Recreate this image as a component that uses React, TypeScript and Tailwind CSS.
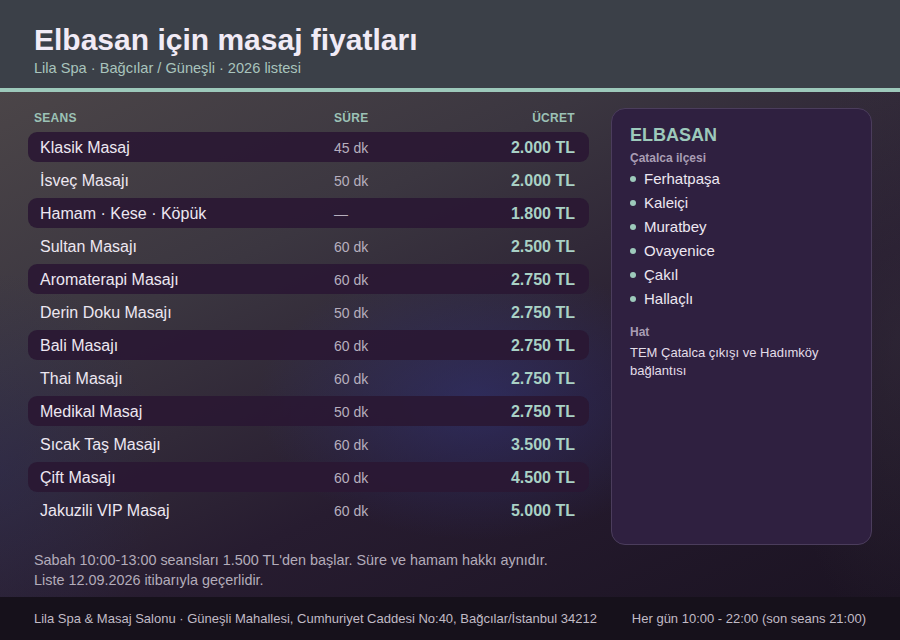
import React from "react";

const seanslar = [
  { ad: "Klasik Masaj", sure: "45 dk", ucret: "2.000 TL" },
  { ad: "İsveç Masajı", sure: "50 dk", ucret: "2.000 TL" },
  { ad: "Hamam · Kese · Köpük", sure: "—", ucret: "1.800 TL" },
  { ad: "Sultan Masajı", sure: "60 dk", ucret: "2.500 TL" },
  { ad: "Aromaterapi Masajı", sure: "60 dk", ucret: "2.750 TL" },
  { ad: "Derin Doku Masajı", sure: "50 dk", ucret: "2.750 TL" },
  { ad: "Bali Masajı", sure: "60 dk", ucret: "2.750 TL" },
  { ad: "Thai Masajı", sure: "60 dk", ucret: "2.750 TL" },
  { ad: "Medikal Masaj", sure: "50 dk", ucret: "2.750 TL" },
  { ad: "Sıcak Taş Masajı", sure: "60 dk", ucret: "3.500 TL" },
  { ad: "Çift Masajı", sure: "60 dk", ucret: "4.500 TL" },
  { ad: "Jakuzili VIP Masaj", sure: "60 dk", ucret: "5.000 TL" },
];

const mahalleler = ["Ferhatpaşa", "Kaleiçi", "Muratbey", "Ovayenice", "Çakıl", "Hallaçlı"];

const App: React.FC = () => {
  return (
    <div className="w-[900px] h-[640px] flex flex-col overflow-hidden font-['Liberation_Sans',Arial,sans-serif] bg-[#1a1320]">
      {/* Header */}
      <header className="h-[88px] bg-[#3b4048] px-[34px] pt-[22px]">
        <h1 className="text-[30px] leading-[36px] font-bold text-[#f1ebf6]">Elbasan için masaj fiyatları</h1>
        <p className="text-[14.6px] leading-[20px] text-[#a9c4bd]">Lila Spa · Bağcılar / Güneşli · 2026 listesi</p>
      </header>
      <div className="h-[4px] bg-[#9dc9bb]" />

      {/* Body */}
      <main className="flex-1 flex flex-col px-[28px] pt-4 bg-[radial-gradient(ellipse_220px_140px_at_53%_61%,rgba(50,52,118,0.6),transparent),radial-gradient(ellipse_160px_200px_at_0%_75%,rgba(40,40,90,0.35),transparent),radial-gradient(ellipse_120px_300px_at_100%_50%,rgba(60,55,65,0.35),transparent),linear-gradient(155deg,#4b4548_0%,#3b3640_30%,#271c30_62%,#1b1322_100%)]">
        <div className="flex items-start gap-[22px]">
          {/* Price table */}
          <section className="flex-1">
            <div className="grid grid-cols-[300px_1fr_auto] items-center h-[20px] pl-[6px] pr-[14px] text-[12px] font-bold tracking-wide text-[#9cc2b6]">
              <span>SEANS</span>
              <span>SÜRE</span>
              <span>ÜCRET</span>
            </div>
            <div className="mt-1 flex flex-col gap-[3px]">
              {seanslar.map((s, i) => (
                <div
                  key={s.ad}
                  className={`grid grid-cols-[294px_1fr_auto] items-center h-[30px] pl-3 pr-[14px] pt-[2px] rounded-[9px] ${
                    i % 2 === 0 ? "bg-[#2a1733]/90" : ""
                  }`}
                >
                  <span className="text-[16px] text-[#ede7f1]">{s.ad}</span>
                  <span className="text-[14px] text-[#b7afbe]">{s.sure}</span>
                  <span className="text-[16px] font-bold text-[#a9d1c5]">{s.ucret}</span>
                </div>
              ))}
            </div>
          </section>

          {/* District card */}
          <aside className="w-[261px] h-[437px] rounded-[14px] border border-[#4b3d5c] bg-[#2f2040] px-[18px] pt-4">
            <h2 className="text-[18px] leading-[20px] font-bold text-[#9dc9bb]">ELBASAN</h2>
            <p className="mt-[5px] text-[12px] leading-[16px] font-bold text-[#a99db4]">Çatalca ilçesi</p>
            <ul className="mt-[1px]">
              {mahalleler.map((m) => (
                <li key={m} className="flex items-center gap-2 h-[24px] text-[15px] text-[#ede7f1]">
                  <span className="w-[6px] h-[6px] rounded-full bg-[#9dc9bb]" />
                  {m}
                </li>
              ))}
            </ul>
            <p className="mt-[13px] text-[12px] leading-[16px] font-bold text-[#a99db4]">Hat</p>
            <p className="mt-1 text-[13px] leading-[18px] text-[#e3dde8]">TEM Çatalca çıkışı ve Hadımköy bağlantısı</p>
          </aside>
        </div>

        <div className="mt-[5px] pl-[6px] text-[14.4px] leading-[20px] text-[#b3acba]">
          <p>Sabah 10:00-13:00 seansları 1.500 TL'den başlar. Süre ve hamam hakkı aynıdır.</p>
          <p>Liste 12.09.2026 itibarıyla geçerlidir.</p>
        </div>
      </main>

      {/* Footer */}
      <footer className="h-[43px] shrink-0 bg-[#16111b] px-[34px] flex items-center justify-between text-[13px] text-[#c1bbc6]">
        <span>Lila Spa &amp; Masaj Salonu · Güneşli Mahallesi, Cumhuriyet Caddesi No:40, Bağcılar/İstanbul 34212</span>
        <span>Her gün 10:00 - 22:00 (son seans 21:00)</span>
      </footer>
    </div>
  );
};

export default App;
